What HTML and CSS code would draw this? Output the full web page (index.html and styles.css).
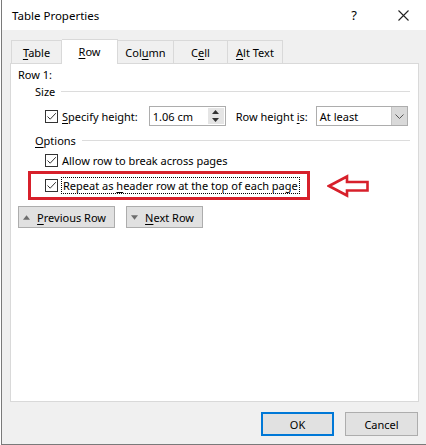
FILE: index.html
```html
<!DOCTYPE html>
<html lang="en">
<head>
  <meta charset="UTF-8" />
  <title>Table Properties</title>
  <link rel="stylesheet" href="styles.css">
</head>
<body>

  <div class="window">
    <div class="titlebar">
      <span class="title">Table Properties</span>
      <span class="help">?</span>
      <span class="close">
        <svg width="11" height="11" viewBox="0 0 11 11"><path d="M0.5 0.5 L10.5 10.5 M10.5 0.5 L0.5 10.5" stroke="#222" stroke-width="1.1" fill="none"/></svg>
      </span>
    </div>

    <div class="content">
      <div class="tabs">
        <div class="tab"><span><u>T</u>able</span></div>
        <div class="tab active"><span><u>R</u>ow</span></div>
        <div class="tab"><span>Col<u>u</u>mn</span></div>
        <div class="tab"><span>C<u>e</u>ll</span></div>
        <div class="tab"><span><u>A</u>lt Text</span></div>
      </div>

      <div class="panel">
        <div class="line">Row 1:</div>

        <div class="group-head"><span>Size</span></div>
        <div class="size-row">
          <label class="check">
            <span class="box"><svg width="11" height="11" viewBox="0 0 11 11"><path d="M1.5 5.5 L4.2 8.2 L9.8 2.2" stroke="#333" stroke-width="1" fill="none"/></svg></span>
            <span><u>S</u>pecify height:</span>
          </label>
          <div class="spin">
            <span class="spin-text">1.06 cm</span>
            <span class="spin-btns">
              <span class="spin-btn"><svg width="7" height="4" viewBox="0 0 7 4"><path d="M0 4 L3.5 0 L7 4 Z" fill="#333"/></svg></span>
              <span class="spin-btn"><svg width="7" height="4" viewBox="0 0 7 4"><path d="M0 0 L3.5 4 L7 0 Z" fill="#333"/></svg></span>
            </span>
          </div>
          <span class="lbl">Row height <u>i</u>s:</span>
          <div class="select">
            <span class="select-text">At least</span>
            <span class="select-btn"><svg width="9" height="5" viewBox="0 0 9 5"><path d="M0.5 0.5 L4.5 4.5 L8.5 0.5" stroke="#555" stroke-width="1" fill="none"/></svg></span>
          </div>
        </div>

        <div class="group-head"><span><u>O</u>ptions</span></div>
        <label class="check opt">
          <span class="box"><svg width="11" height="11" viewBox="0 0 11 11"><path d="M1.5 5.5 L4.2 8.2 L9.8 2.2" stroke="#333" stroke-width="1" fill="none"/></svg></span>
          <span>Allow row to break across pages</span>
        </label>
        <div class="marked">
          <div class="mark-box">
            <label class="check">
              <span class="box"><svg width="11" height="11" viewBox="0 0 11 11"><path d="M1.5 5.5 L4.2 8.2 L9.8 2.2" stroke="#333" stroke-width="1" fill="none"/></svg></span>
              <span class="focus">Repeat as <u>h</u>eader row at the top of each page</span>
            </label>
          </div>
          <svg class="arrow" width="44" height="24" viewBox="0 0 44 24"><path d="M2 12 L20 2.5 L20 8 L40.5 8 L40.5 16.5 L20 16.5 L20 21.5 Z" fill="#fff" stroke="#d7202b" stroke-width="2.6" stroke-linejoin="miter"/></svg>
        </div>

        <div class="nav">
          <button class="btn nav-btn"><svg width="11" height="7" viewBox="0 0 11 7"><path d="M0 7 L5.5 0 L11 7 Z" fill="#6d6d6d"/></svg><span><u>P</u>revious Row</span></button>
          <button class="btn nav-btn"><svg width="11" height="7" viewBox="0 0 11 7"><path d="M0 0 L5.5 7 L11 0 Z" fill="#6d6d6d"/></svg><span><u>N</u>ext Row</span></button>
        </div>
      </div>

      <div class="footer">
        <button class="btn dlg-btn default">OK</button>
        <button class="btn dlg-btn">Cancel</button>
      </div>
    </div>
  </div>

</body>
</html>
```

FILE: styles.css
```css
* {
  box-sizing: border-box;
}

body {
  margin: 0;
  font-family: 'Noto Sans', 'Open Sans', sans-serif;
  font-size: 11px;
  color: #000;
  background: #fff;
  white-space: nowrap;
}

u {
  text-underline-offset: 2px;
}

.window {
  width: 426px;
  height: 445px;
  margin-left: 1px;
  border: 1px solid #7a7a7a;
  border-top: none;
  background: #f0f0f0;
  display: flex;
  flex-direction: column;
}

.titlebar {
  height: 30px;
  background: #fff;
  display: flex;
  align-items: center;
  padding-left: 10px;
}

.title {
  flex: 1;
  font-size: 11.5px;
}

.help {
  width: 46px;
  text-align: center;
  font-size: 13px;
  margin-right: 3px;
}

.close {
  width: 46px;
  display: flex;
  justify-content: center;
}

.content {
  flex: 1;
  display: flex;
  flex-direction: column;
  padding: 10px 7px 0 8px;
}

.tabs {
  display: flex;
  padding-left: 1px;
  height: 23px;
  align-items: flex-end;
}

.tab {
  height: 23px;
  border: 1px solid #d9d9d9;
  border-bottom: none;
  border-left: none;
  display: flex;
  align-items: center;
  justify-content: center;
  background: #f0f0f0;
}

.tab:first-child {
  border-left: 1px solid #d9d9d9;
}

.tab:nth-child(1) { width: 51px; }
.tab:nth-child(2) { width: 56px; }
.tab:nth-child(3) { width: 56px; }
.tab:nth-child(4) { width: 54px; }
.tab:nth-child(5) { width: 55px; }

.tab.active {
  background: #fff;
  height: 25px;
  margin-bottom: -1px;
  position: relative;
  z-index: 1;
  padding-bottom: 2px;
}

.panel {
  height: 339px;
  background: #fff;
  border: 1px solid #d9d9d9;
  padding: 3px 0 0 7px;
}

.line {
  height: 16px;
  line-height: 16px;
}

.group-head {
  display: flex;
  align-items: center;
  height: 16px;
  margin-left: 17px;
  margin-right: 8px;
  gap: 6px;
}

.group-head::after {
  content: '';
  flex: 1;
  border-top: 1px solid #dcdcdc;
}

.size-row {
  display: flex;
  align-items: center;
  height: 20px;
  margin-top: 7px;
  margin-left: 27px;
}

.check {
  display: flex;
  align-items: center;
  gap: 4px;
}

.box {
  width: 13px;
  height: 13px;
  border: 1px solid #333;
  background: #fff;
  display: flex;
  align-items: center;
  justify-content: center;
}

.spin {
  margin-left: 11px;
  width: 77px;
  height: 20px;
  border: 1px solid #adadad;
  display: flex;
  align-items: center;
  padding-left: 3px;
}

.spin-text {
  flex: 1;
}

.spin-btns {
  width: 16px;
  height: 16px;
  margin-right: 1px;
  display: flex;
  flex-direction: column;
  background: #e5e5e5;
}

.spin-btn {
  flex: 1;
  display: flex;
  align-items: center;
  justify-content: center;
}

.lbl {
  margin-left: 10px;
}

.select {
  margin-left: 8px;
  width: 92px;
  height: 20px;
  border: 1px solid #adadad;
  display: flex;
  align-items: center;
  padding-left: 3px;
}

.select-text {
  flex: 1;
}

.select-btn {
  width: 16px;
  height: 18px;
  background: #d9d9d9;
  border-left: 1px solid #c4c4c4;
  display: flex;
  align-items: center;
  justify-content: center;
}

.size-row + .group-head {
  margin-top: 6px;
}

.opt {
  margin-left: 27px;
  margin-top: 4px;
  height: 17px;
}

.marked {
  display: flex;
  align-items: center;
  margin-left: 10px;
  margin-top: 2px;
}

.mark-box {
  width: 282px;
  height: 29px;
  border: 3px solid #d7202b;
  display: flex;
  align-items: center;
  padding-left: 14px;
}

.focus {
  outline: 1px dotted #000;
  padding: 0 1px;
  line-height: 15px;
}

.arrow {
  margin-left: 17px;
}

.nav {
  display: flex;
  gap: 11px;
  margin-top: 6px;
}

.btn {
  font-family: inherit;
  font-size: 11px;
  color: #000;
  background: #e1e1e1;
  border: 1px solid #adadad;
  padding: 0;
  cursor: pointer;
}

.nav-btn {
  height: 22px;
  display: flex;
  align-items: center;
  gap: 7px;
  padding: 0 8px 0 4px;
}

.nav-btn:first-child {
  width: 97px;
}

.nav-btn:last-child {
  width: 77px;
}

.footer {
  display: flex;
  justify-content: flex-end;
  gap: 11px;
  padding-top: 10px;
  padding-right: 1px;
}

.dlg-btn {
  width: 73px;
  height: 24px;
}

.dlg-btn.default {
  border: 2px solid #0078d7;
}
```
